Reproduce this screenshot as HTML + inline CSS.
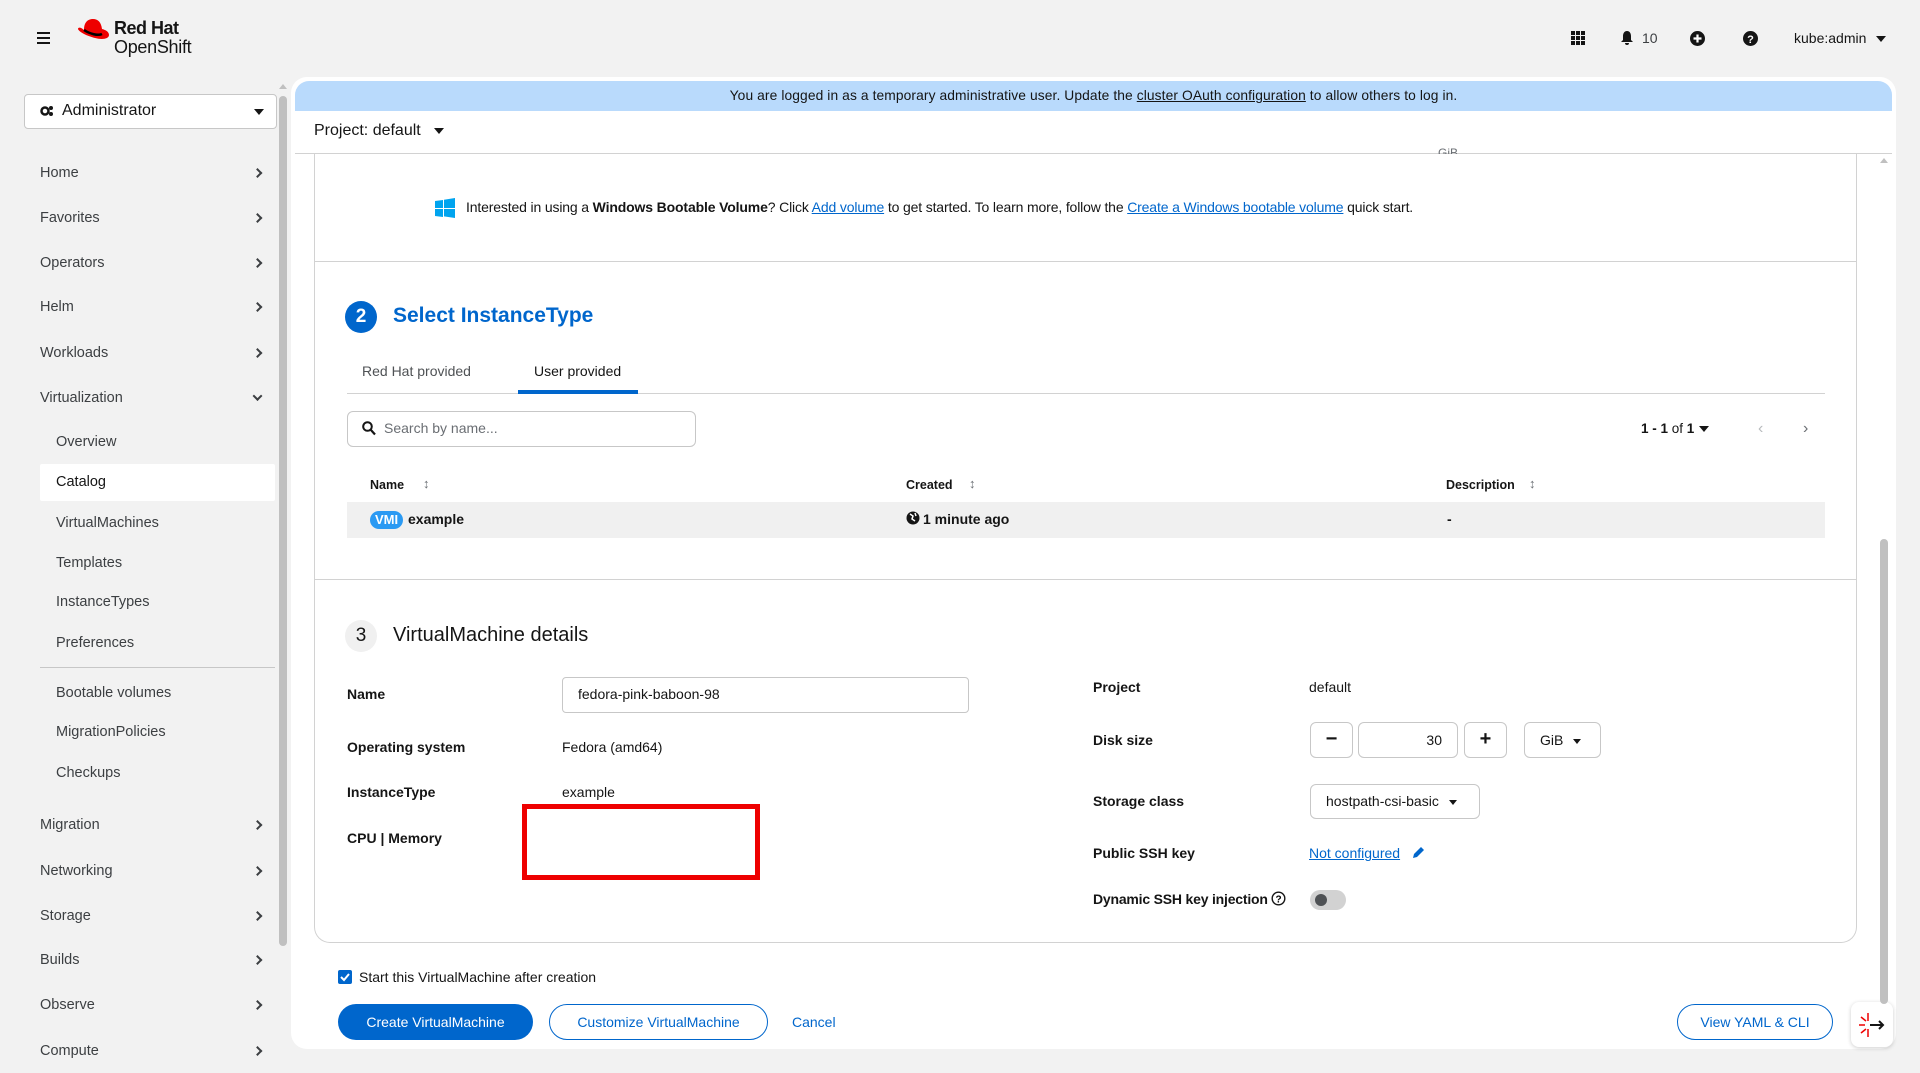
<!DOCTYPE html>
<html><head><meta charset="utf-8"><style>
*{box-sizing:border-box;margin:0;padding:0}
body{width:1920px;height:1073px;background:#f2f2f2;font-family:"Liberation Sans",sans-serif;color:#151515;position:relative;overflow:hidden;font-size:14px}
.a{position:absolute;white-space:nowrap}
.nav{position:absolute;left:40px;font-size:14.5px;color:#3c3f42;transform:translateY(-50%)}
.sub{left:56px}
.chev{position:absolute;left:254px;width:7px;height:7px;border-right:2px solid #3c3f42;border-top:2px solid #3c3f42;transform:translateY(-50%) rotate(45deg)}
.lbl{font-weight:bold;font-size:14px;transform:translateY(-50%)}
.val{font-size:14px;transform:translateY(-50%)}
.box{position:absolute;border:1px solid #c7c7c7;border-radius:6px;background:#fff}
.caret{display:inline-block;width:0;height:0;border-left:5px solid transparent;border-right:5px solid transparent;border-top:6px solid #151515;vertical-align:middle}
.ca{position:absolute;width:0;height:0;border-left:5px solid transparent;border-right:5px solid transparent;border-top:6px solid #151515}
a{color:#0066cc;text-decoration:underline}
</style></head><body>
<!-- header -->
<div class="a" style="left:37px;top:32px;width:13px;height:2px;background:#151515;box-shadow:0 5px 0 #151515,0 10px 0 #151515"></div>
<svg class="a" style="left:76px;top:18px" width="34" height="28" viewBox="0 0 34 28"><path d="M8 12 C8 4 12 1 17 1 C22 1 25 4 26 11 C30 12 33 14 33 17 C33 21 26 22 19 20 C11 18 3 14 2 11 C2 9 5 9 8 12Z" fill="#e00"/><path d="M8 12 C14 16 22 18 26 16" stroke="#000" stroke-width="2.5" fill="none"/></svg>
<div class="a" style="left:114px;top:18px;font-size:18px;font-weight:bold;letter-spacing:-0.5px">Red Hat</div>
<div class="a" style="left:114px;top:37px;font-size:18px;letter-spacing:-0.3px">OpenShift</div>
<svg class="a" style="left:1571px;top:31px" width="14" height="14"><g fill="#151515"><rect x="0" y="0" width="4" height="4"/><rect x="5" y="0" width="4" height="4"/><rect x="10" y="0" width="4" height="4"/><rect x="0" y="5" width="4" height="4"/><rect x="5" y="5" width="4" height="4"/><rect x="10" y="5" width="4" height="4"/><rect x="0" y="10" width="4" height="4"/><rect x="5" y="10" width="4" height="4"/><rect x="10" y="10" width="4" height="4"/></g></svg>
<svg class="a" style="left:1620px;top:30px" width="14" height="16"><path d="M7 1C4 1 3 4 3 6v4L1 12h12l-2-2V6C11 4 10 1 7 1z M5 13h4a2 2 0 0 1-4 0z" fill="#151515"/></svg>
<div class="a" style="left:1642px;top:30px;font-size:14px;color:#3c3f42">10</div>
<svg class="a" style="left:1690px;top:31px" width="15" height="15"><circle cx="7.5" cy="7.5" r="7.5" fill="#151515"/><path d="M7.5 3.5v8M3.5 7.5h8" stroke="#fff" stroke-width="2.2"/></svg>
<svg class="a" style="left:1743px;top:31px" width="15" height="15"><circle cx="7.5" cy="7.5" r="7.5" fill="#151515"/><text x="7.5" y="12" font-size="11" font-weight="bold" fill="#fff" text-anchor="middle" font-family="Liberation Sans">?</text></svg>
<div class="a" style="left:1794px;top:30px;font-size:14px;color:#151515">kube:admin</div>
<div class="ca" style="left:1876px;top:36px"></div>

<!-- sidebar -->
<div class="box" style="left:24px;top:94px;width:253px;height:35px;border-radius:4px"></div>
<svg class="a" style="left:40px;top:105px" width="14" height="12"><circle cx="5" cy="6" r="3.5" fill="none" stroke="#151515" stroke-width="2.5"/><circle cx="11" cy="3" r="2" fill="#151515"/><circle cx="11" cy="9" r="2" fill="#151515"/></svg>
<div class="a" style="left:62px;top:102px;font-size:16px">Administrator</div>
<div class="ca" style="left:254px;top:109px"></div>
<div class="nav" style="top:173px">Home</div><div class="chev" style="top:173px"></div>
<div class="nav" style="top:218px">Favorites</div><div class="chev" style="top:218px"></div>
<div class="nav" style="top:263px">Operators</div><div class="chev" style="top:263px"></div>
<div class="nav" style="top:307px">Helm</div><div class="chev" style="top:307px"></div>
<div class="nav" style="top:353px">Workloads</div><div class="chev" style="top:353px"></div>
<div class="nav" style="top:398px">Virtualization</div><div class="chev" style="top:396px;transform:translateY(-50%) rotate(135deg)"></div>
<div class="a" style="left:40px;top:464px;width:235px;height:37px;background:#fff;border-radius:2px"></div>
<div class="nav sub" style="top:442px">Overview</div>
<div class="nav sub" style="top:482px;color:#151515">Catalog</div>
<div class="nav sub" style="top:523px">VirtualMachines</div>
<div class="nav sub" style="top:563px">Templates</div>
<div class="nav sub" style="top:602px">InstanceTypes</div>
<div class="nav sub" style="top:643px">Preferences</div>
<div class="a" style="left:40px;top:667px;width:235px;height:1px;background:#c7c7c7"></div>
<div class="nav sub" style="top:693px">Bootable volumes</div>
<div class="nav sub" style="top:732px">MigrationPolicies</div>
<div class="nav sub" style="top:773px">Checkups</div>
<div class="nav" style="top:825px">Migration</div><div class="chev" style="top:825px"></div>
<div class="nav" style="top:871px">Networking</div><div class="chev" style="top:871px"></div>
<div class="nav" style="top:916px">Storage</div><div class="chev" style="top:916px"></div>
<div class="nav" style="top:960px">Builds</div><div class="chev" style="top:960px"></div>
<div class="nav" style="top:1005px">Observe</div><div class="chev" style="top:1005px"></div>
<div class="nav" style="top:1051px">Compute</div><div class="chev" style="top:1051px"></div>
<div class="a" style="left:279px;top:96px;width:8px;height:850px;background:#c0c0c0;border-radius:4px"></div>
<div class="a" style="left:279px;top:84px;width:0;height:0;border-left:4px solid transparent;border-right:4px solid transparent;border-bottom:5px solid #c0c0c0"></div>

<!-- main panel -->
<div class="a" style="left:291px;top:77px;width:1605px;height:972px;background:#fff;border-radius:16px"></div>
<div class="a" style="left:295px;top:81px;width:1597px;height:30px;background:#b9dafc;border-radius:14px 14px 0 0"></div>
<div class="a" style="left:295px;top:88px;width:1597px;text-align:center;font-size:13.8px;letter-spacing:0.1px">You are logged in as a temporary administrative user. Update the <span style="text-decoration:underline">cluster OAuth configuration</span> to allow others to log in.</div>
<div class="a" style="left:314px;top:122px;font-size:16px">Project: default</div>
<div class="ca" style="left:434px;top:128px"></div>
<div class="a" style="left:295px;top:153px;width:1597px;height:1px;background:#d2d2d2"></div>
<!-- card -->
<div class="a" style="left:314px;top:153px;width:1543px;height:790px;border:1px solid #d2d2d2;border-top:none;border-radius:0 0 16px 16px"></div>
<div class="a" style="left:1438px;top:146px;font-size:12px;color:#6a6e73;height:8px;overflow:hidden">GiB</div>
<svg class="a" style="left:435px;top:198px" width="20" height="20"><path d="M0 3l8-1v8H0z M9 1.8L20 0v10H9z M0 11h8v8l-8-1z M9 11h11v9l-11-1.6z" fill="#00a4ef"/></svg>
<div class="a" style="left:466px;top:199px;font-size:14px;letter-spacing:-0.15px">Interested in using a <b>Windows Bootable Volume</b>? Click <a>Add volume</a> to get started. To learn more, follow the <a>Create a Windows bootable volume</a> quick start.</div>
<div class="a" style="left:315px;top:261px;width:1541px;height:1px;background:#d2d2d2"></div>
<div class="a" style="left:345px;top:301px;width:32px;height:32px;border-radius:50%;background:#0066cc;color:#fff;font-weight:bold;font-size:19px;text-align:center;line-height:32px">2</div>
<div class="a" style="left:393px;top:304px;font-size:21px;font-weight:bold;color:#0066cc">Select InstanceType</div>
<div class="a" style="left:362px;top:363px;font-size:14px;color:#4f5255">Red Hat provided</div>
<div class="a" style="left:534px;top:363px;font-size:14px">User provided</div>
<div class="a" style="left:347px;top:393px;width:1478px;height:1px;background:#d2d2d2"></div>
<div class="a" style="left:518px;top:390px;width:120px;height:4px;background:#0066cc"></div>
<div class="box" style="left:347px;top:411px;width:349px;height:36px"></div>
<svg class="a" style="left:362px;top:421px" width="14" height="15"><circle cx="5.5" cy="5.5" r="4.3" fill="none" stroke="#151515" stroke-width="2"/><path d="M8.5 8.5l4.5 5" stroke="#151515" stroke-width="2.2"/></svg>
<div class="a" style="left:384px;top:420px;font-size:14px;color:#6a6e73">Search by name...</div>
<div class="a" style="left:1641px;top:421px;font-size:13.5px"><b>1 - 1</b> of <b>1</b></div>
<div class="ca" style="left:1699px;top:426px"></div>
<div class="a" style="left:1758px;top:420px;font-size:16px;color:#b8bbbe">&#8249;</div>
<div class="a" style="left:1803px;top:420px;font-size:16px;color:#6a6e73">&#8250;</div>
<div class="a" style="left:370px;top:478px;font-size:12.5px;font-weight:bold">Name</div>
<div class="a" style="left:423px;top:476px;font-size:13px;color:#6a6e73">&#8597;</div>
<div class="a" style="left:906px;top:478px;font-size:12.5px;font-weight:bold">Created</div>
<div class="a" style="left:969px;top:476px;font-size:13px;color:#6a6e73">&#8597;</div>
<div class="a" style="left:1446px;top:478px;font-size:12.5px;font-weight:bold">Description</div>
<div class="a" style="left:1529px;top:476px;font-size:13px;color:#6a6e73">&#8597;</div>
<div class="a" style="left:347px;top:502px;width:1478px;height:36px;background:#f0f0f0"></div>
<div class="a" style="left:370px;top:511px;width:33px;height:18px;border-radius:9px;background:#2b9af3;color:#fff;font-size:13px;font-weight:bold;text-align:center;line-height:18px">VMI</div>
<div class="a" style="left:408px;top:511px;font-size:14px;font-weight:bold">example</div>
<svg class="a" style="left:906px;top:511px" width="14" height="14"><circle cx="7" cy="7" r="6.5" fill="#151515"/><path d="M4 3l3 2-1 3 3 2M9 2l1 3" stroke="#fff" stroke-width="1.5" fill="none"/></svg>
<div class="a" style="left:923px;top:511px;font-size:14px;font-weight:bold">1 minute ago</div>
<div class="a" style="left:1447px;top:511px;font-size:14px;font-weight:bold">-</div>
<div class="a" style="left:315px;top:579px;width:1541px;height:1px;background:#d2d2d2"></div>
<div class="a" style="left:345px;top:620px;width:32px;height:32px;border-radius:50%;background:#f0f0f0;color:#151515;font-size:19px;text-align:center;line-height:32px">3</div>
<div class="a" style="left:393px;top:624px;font-size:20px">VirtualMachine details</div>

<div class="a lbl" style="left:347px;top:694px">Name</div>
<div class="box" style="left:562px;top:677px;width:407px;height:36px;border-radius:4px"></div>
<div class="a val" style="left:578px;top:694px">fedora-pink-baboon-98</div>
<div class="a lbl" style="left:347px;top:747px">Operating system</div>
<div class="a val" style="left:562px;top:747px">Fedora (amd64)</div>
<div class="a lbl" style="left:347px;top:792px">InstanceType</div>
<div class="a val" style="left:562px;top:792px">example</div>
<div class="a lbl" style="left:347px;top:838px">CPU | Memory</div>
<div class="a" style="left:522px;top:804px;width:238px;height:76px;border:5px solid #e00"></div>

<div class="a lbl" style="left:1093px;top:687px">Project</div>
<div class="a val" style="left:1309px;top:687px">default</div>
<div class="a lbl" style="left:1093px;top:740px">Disk size</div>
<div class="box" style="left:1310px;top:722px;width:43px;height:36px;font-size:20px;font-weight:bold;text-align:center;line-height:32px">&minus;</div>
<div class="box" style="left:1358px;top:722px;width:100px;height:36px;text-align:right;padding-right:15px;line-height:34px;font-size:14px">30</div>
<div class="box" style="left:1464px;top:722px;width:43px;height:36px;font-size:20px;font-weight:bold;text-align:center;line-height:33px">+</div>
<div class="box" style="left:1524px;top:722px;width:77px;height:36px;font-size:14px;line-height:34px;padding-left:15px">GiB <span class="caret" style="margin-left:6px;border-width:5px 4px 0"></span></div>
<div class="a lbl" style="left:1093px;top:801px">Storage class</div>
<div class="box" style="left:1310px;top:784px;width:170px;height:35px;font-size:14px;line-height:33px;padding-left:15px">hostpath-csi-basic <span class="caret" style="margin-left:6px;border-width:5px 4px 0"></span></div>
<div class="a lbl" style="left:1093px;top:853px">Public SSH key</div>
<div class="a val" style="left:1309px;top:853px"><a>Not configured</a></div>
<svg class="a" style="left:1411px;top:845px" width="14" height="15"><path d="M2 13l1-4 7-7 3 3-7 7z" fill="#0066cc"/></svg>
<div class="a lbl" style="left:1093px;top:899px;letter-spacing:-0.2px">Dynamic SSH key injection</div>
<svg class="a" style="left:1271px;top:891px" width="15" height="15"><circle cx="7.5" cy="7.5" r="6.3" fill="none" stroke="#151515" stroke-width="1.4"/><text x="7.5" y="11.5" font-size="10" font-weight="bold" text-anchor="middle" font-family="Liberation Sans">?</text></svg>
<div class="a" style="left:1310px;top:890px;width:36px;height:20px;border-radius:10px;background:#d2d2d2"></div>
<div class="a" style="left:1315px;top:894px;width:12px;height:12px;border-radius:50%;background:#4f5255"></div>

<div class="a" style="left:338px;top:970px;width:14px;height:14px;border-radius:2px;background:#0066cc"></div>
<svg class="a" style="left:338px;top:970px" width="14" height="14"><path d="M3 7l3 3 5-6" stroke="#fff" stroke-width="2" fill="none"/></svg>
<div class="a" style="left:359px;top:969px;font-size:14px">Start this VirtualMachine after creation</div>
<div class="a" style="left:338px;top:1004px;width:195px;height:36px;border-radius:18px;background:#0066cc;color:#fff;font-size:14px;text-align:center;line-height:36px">Create VirtualMachine</div>
<div class="a" style="left:549px;top:1004px;width:219px;height:36px;border-radius:18px;border:1px solid #0066cc;color:#0066cc;font-size:14px;text-align:center;line-height:34px">Customize VirtualMachine</div>
<div class="a" style="left:792px;top:1014px;font-size:14px;color:#0066cc">Cancel</div>
<div class="a" style="left:1677px;top:1004px;width:156px;height:36px;border-radius:18px;border:1px solid #0066cc;color:#0066cc;font-size:14px;text-align:center;line-height:34px">View YAML &amp; CLI</div>
<div class="a" style="left:1851px;top:1002px;width:42px;height:45px;background:#fff;border-radius:8px;box-shadow:0 1px 4px rgba(0,0,0,.2)"></div>
<svg class="a" style="left:1858px;top:1012px" width="28" height="26"><g stroke="#e00" stroke-width="1.5"><path d="M10 1v8M10 17v8M3 5l5 4M3 21l5-4M1 13h6"/></g><path d="M12 13h13M21 9l4 4-4 4" stroke="#151515" stroke-width="2" fill="none"/></svg>
<div class="a" style="left:1880px;top:539px;width:8px;height:465px;background:#c0c0c0;border-radius:4px"></div>
<div class="a" style="left:1880px;top:158px;width:0;height:0;border-left:4px solid transparent;border-right:4px solid transparent;border-bottom:5px solid #c0c0c0"></div>
</body></html>
